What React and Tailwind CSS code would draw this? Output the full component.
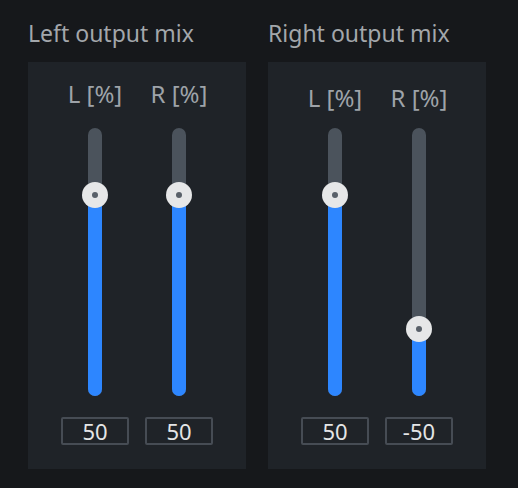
import React from "react";

const font = { fontFamily: '"Noto Sans", "Open Sans", sans-serif' };

function Slider({ label, value, labelH }) {
  const pct = (value + 100) / 200;
  return (
    <div className="flex w-[68px] flex-col items-center">
      <div className="text-[24px] leading-[30px] text-[#9ea3a9]" style={{ height: labelH }}>{label}</div>
      <div className="relative h-[268px] w-[14px] rounded-full bg-[#4b535c]">
        <div
          className="absolute bottom-0 left-0 w-full rounded-full bg-[#2d86ff]"
          style={{ height: `${pct * 100}%` }}
        />
        <div
          className="absolute left-1/2 flex h-[26px] w-[26px] -translate-x-1/2 translate-y-1/2 items-center justify-center rounded-full bg-[#e6e7e8]"
          style={{ bottom: `${pct * 100}%` }}
        >
          <div className="h-[6px] w-[6px] rounded-full bg-[#596069]" />
        </div>
      </div>
      <div className="mt-[21px] flex h-[28px] w-[68px] items-center justify-center rounded-[2px] border-2 border-[#464c54] text-[22px] leading-none text-[#e4e5e6]">
        {value}
      </div>
    </div>
  );
}

function Group({ title, values, pt }) {
  return (
    <div className="flex w-[218px] flex-col">
      <div className="h-[62px] pt-[18px] text-[23px] leading-[30px] text-[#a3a7ab]">{title}</div>
      <div className="flex h-[407px] gap-[16px] bg-[#1f2328] pl-[33px]" style={{ paddingTop: pt }}>
        <Slider label="L [%]" value={values[0]} labelH={66 - pt} />
        <Slider label="R [%]" value={values[1]} labelH={66 - pt} />
      </div>
    </div>
  );
}

export default function App() {
  return (
    <div className="flex h-[488px] w-[518px] gap-[22px] bg-[#16181b] pl-[28px]" style={font}>
      <Group title="Left output mix" values={[50, 50]} pt={17} />
      <Group title="Right output mix" values={[50, -50]} pt={21} />
    </div>
  );
}
